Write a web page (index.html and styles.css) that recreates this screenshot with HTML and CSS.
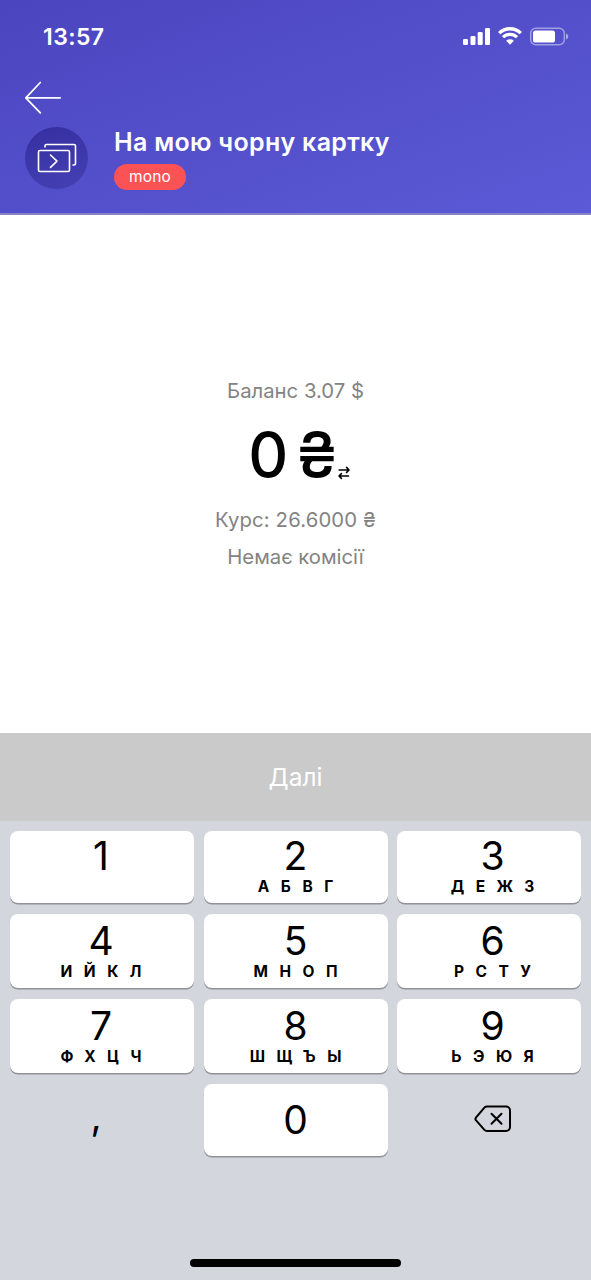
FILE: index.html
```html
<!DOCTYPE html>
<html lang="uk">
<head>
  <meta charset="UTF-8">
  <title>На мою чорну картку</title>
  <link rel="stylesheet" href="styles.css">
</head>
<body>

  <header class="header">
    <div class="status-bar">
      <span class="time">13:57</span>
      <svg class="status-icons" width="108" height="24" viewBox="0 0 108 24" fill="#fff">
        <rect x="1" y="15" width="5" height="6" rx="1.3"/>
        <rect x="8.5" y="12" width="5" height="9" rx="1.3"/>
        <rect x="15.7" y="8" width="5" height="13" rx="1.3"/>
        <rect x="23" y="4" width="5" height="17" rx="1.3"/>
        <g fill="none" stroke="#fff" stroke-width="3.3">
          <path d="M37.2 9.2a15.3 15.3 0 0 1 21.6 0"/>
          <path d="M41 13.2a9.900 9.900 0 0 1 14 0"/>
        </g>
        <path d="M44.2 16.8a5.6 5.6 0 0 1 7.6 0L48 20.7z"/>
        <rect x="68.7" y="4.2" width="33.6" height="16.6" rx="5" fill="none" stroke="#fff" stroke-opacity=".45" stroke-width="1.5"/>
        <rect x="71" y="6.5" width="22" height="12" rx="2.6"/>
        <path d="M104 9.5c3 1 3 5 0 6z" fill-opacity=".5"/>
      </svg>
    </div>
    <button class="back">
      <svg width="38" height="34" viewBox="0 0 38 34" fill="none" stroke="#fff" stroke-width="1.7" stroke-linecap="round" stroke-linejoin="round">
        <path d="M35.2 16.8H.8M15.3 1.5L.8 16.8L15.3 31.8"/>
      </svg>
    </button>
    <div class="recipient">
      <div class="avatar">
        <svg width="40" height="30" viewBox="0 0 40 30" fill="none" stroke="#fff" stroke-width="1.6" stroke-linecap="round" stroke-linejoin="round">
          <rect x="1.5" y="7.5" width="31" height="21" rx="1.5"/>
          <path d="M8 4V3a1.5 1.5 0 0 1 1.5-1.5H37a1.5 1.5 0 0 1 1.5 1.5V20.5a1.5 1.5 0 0 1-1.5 1.5H36"/>
          <path d="M13.5 12l6.5 6.2-6.5 6.2"/>
        </svg>
      </div>
      <div class="recipient-info">
        <h1 class="title">На мою чорну картку</h1>
        <span class="tag">mono</span>
      </div>
    </div>
  </header>

  <main class="content">
    <p class="balance">Баланс 3.07 $</p>
    <div class="amount">
      <span class="value">0</span>
      <span class="currency">₴</span>
      <svg class="swap" width="12" height="14" viewBox="0 0 12 14" fill="none" stroke="#000" stroke-width="1.6" stroke-linecap="round" stroke-linejoin="round">
        <path d="M1.2 4H11M8.6 1.4L11 4L8.6 6.4"/>
        <path d="M10.5 10H1M3.4 7.6L1 10L3.4 12.4"/>
      </svg>
    </div>
    <p class="rate">Курс: 26.6000 ₴</p>
    <p class="fee">Немає комісії</p>
  </main>

  <button class="next">Далі</button>

  <div class="keyboard">
    <div class="keys">
      <button class="key key-top key-left">1</button>
      <button class="key key-top">2<span class="letters">АБВГ</span></button>
      <button class="key key-top key-right">3<span class="letters">ДЕЖЗ</span></button>
      <button class="key key-left">4<span class="letters">ИЙКЛ</span></button>
      <button class="key">5<span class="letters">МНОП</span></button>
      <button class="key key-right">6<span class="letters">РСТУ</span></button>
      <button class="key key-left">7<span class="letters">ФХЦЧ</span></button>
      <button class="key">8<span class="letters">ШЩЪЫ</span></button>
      <button class="key key-right">9<span class="letters">ЬЭЮЯ</span></button>
      <button class="key key-plain key-comma">,</button>
      <button class="key key-zero">0</button>
      <button class="key key-plain key-delete">
        <svg width="38" height="28" viewBox="0 0 38 28" fill="none" stroke="#000" stroke-width="2" stroke-linecap="round" stroke-linejoin="round">
          <path d="M13 1.5H32a4 4 0 0 1 4 4V22a4 4 0 0 1-4 4H13Q11.5 26 10.4 24.9L1.9 15.2Q1 14 1.9 12.6L10.4 2.6Q11.5 1.5 13 1.5z"/>
          <path d="M17.5 8.8L27.5 18.8M27.5 8.8L17.5 18.8"/>
        </svg>
      </button>
    </div>
    <div class="home-indicator"></div>
  </div>

</body>
</html>
```

FILE: styles.css
```css
* {
  box-sizing: border-box;
}
body {
  display: flex;
  flex-direction: column;
  height: 1280px;
  margin: 0;
  font-family: Inter, "Noto Sans", sans-serif;
  color: #000;
  background-color: #fff;
}
button {
  padding: 0;
  font-family: inherit;
  color: inherit;
  background: none;
  border: none;
  cursor: pointer;
}
h1, p {
  margin: 0;
}
.header {
  height: 215px;
  padding: 24px 21px 0 25px;
  color: #fff;
  background: linear-gradient(160deg, #4b45bf 0%, #5c5ad6 100%);
  border-bottom: 2px solid #8783c6;
}
.status-bar {
  display: flex;
  justify-content: space-between;
  height: 26px;
  padding-left: 18px;
}
.time {
  font-size: 23px;
  font-weight: 600;
  line-height: 26px;
  letter-spacing: 0.4px;
}
.back {
  display: block;
  height: 34px;
  margin-top: 31px;
}
.back svg {
  display: block;
}
.recipient {
  display: flex;
  gap: 26px;
  margin-top: 12px;
}
.avatar {
  display: flex;
  align-items: center;
  justify-content: center;
  width: 63px;
  height: 62px;
  background: linear-gradient(165deg, #352fa0, #4540b4);
  border-radius: 50%;
}
.title {
  font-size: 25px;
  font-weight: 600;
  line-height: 30px;
  letter-spacing: 0.3px;
  white-space: nowrap;
}
.tag {
  display: block;
  width: 72px;
  height: 26px;
  margin-top: 7px;
  font-size: 15.5px;
  line-height: 25px;
  letter-spacing: 0.2px;
  text-align: center;
  background-color: #fb5256;
  border-radius: 13px;
}
.content {
  display: flex;
  flex: 1;
  flex-direction: column;
  align-items: center;
  padding-top: 162px;
}
.balance, .rate, .fee {
  font-size: 20.3px;
  line-height: 28px;
  color: #838383;
}
.rate {
  letter-spacing: 0.15px;
}
.amount {
  display: flex;
  align-items: flex-end;
  height: 76px;
  margin: 12px 0 13px;
  padding-left: 7px;
  font-size: 62px;
  font-weight: 500;
  line-height: 76px;
}
.currency {
  margin-left: 8px;
}
.swap {
  margin: 0 0 13px 0;
}
.fee {
  margin-top: 9px;
}
.next {
  height: 88px;
  font-size: 24.5px;
  color: #fff;
  background-color: #cacaca;
}
.keyboard {
  display: flex;
  flex-direction: column;
  align-items: center;
  justify-content: space-between;
  height: 459px;
  padding: 10px 10px 13px;
  background-color: #d3d6dc;
}
.keys {
  display: grid;
  grid-template-columns: repeat(3, 184px);
  grid-template-rows: 72px 74px 74px 72px;
  gap: 11px 9.5px;
}
.key {
  display: flex;
  flex-direction: column;
  align-items: center;
  padding-top: 6px;
  font-size: 39px;
  line-height: 42px;
  background-color: #fff;
  border-radius: 8px;
  box-shadow: 0 1.5px 0 #909298;
}
.key-top {
  padding-top: 4px;
}
.key-left {
  padding-right: 2px;
}
.key-right {
  padding-left: 7px;
}
.letters {
  margin-top: 1px;
  margin-right: -11.5px;
  font-size: 15.5px;
  font-weight: 700;
  line-height: 18px;
  letter-spacing: 11.5px;
}
.key-zero {
  justify-content: center;
  padding: 0;
}
.key-plain {
  justify-content: center;
  padding: 0;
  background: none;
  box-shadow: none;
}
.key-comma {
  padding: 0 12px 8px 0;
}
.key-delete {
  padding: 0 0 2px 8px;
}
.home-indicator {
  width: 211px;
  height: 8px;
  background-color: #000;
  border-radius: 4px;
}
```
